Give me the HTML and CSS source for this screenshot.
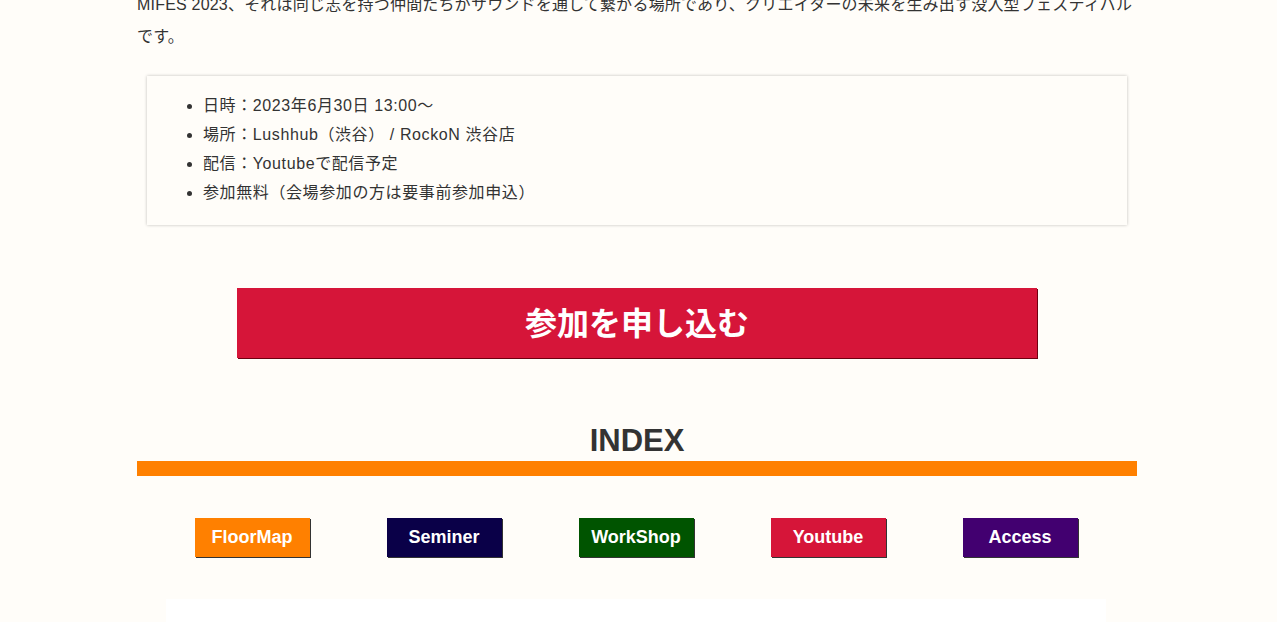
FILE: index.html
```html
<!DOCTYPE html>
<html lang="ja">
<head>
    <meta charset="UTF-8">
    <meta name="viewport" content="width=device-width, initial-scale=1.0">
    <title>MIFES 2023</title>
    <link rel="stylesheet" href="styles.css">
</head>
<body>
    <div class="container">
        <p class="lead">MIFES 2023、それは同じ志を持つ仲間たちがサウンドを通して繋がる場所であり、クリエイターの未来を生み出す没入型フェスティバルです。</p>

        <div class="info">
            <ul>
                <li>日時：2023年6月30日 13:00〜</li>
                <li>場所：Lushhub（渋谷） / RockoN 渋谷店</li>
                <li>配信：Youtubeで配信予定</li>
                <li>参加無料（会場参加の方は要事前参加申込）</li>
            </ul>
        </div>

        <a class="apply" href="#">参加を申し込む</a>

        <h2 class="index-title">INDEX</h2>
        <div class="index-bar"></div>

        <div class="index-links">
            <a class="index-btn floormap" href="#">FloorMap</a>
            <a class="index-btn seminer" href="#">Seminer</a>
            <a class="index-btn workshop" href="#">WorkShop</a>
            <a class="index-btn youtube" href="#">Youtube</a>
            <a class="index-btn access" href="#">Access</a>
        </div>

        <div class="next-section"></div>
    </div>
</body>
</html>
```

FILE: styles.css
```css
body {
    margin: 0;
    padding: 0 3px 0 0;
    background-color: #fffdf9; /* Off white */
    color: #333;
    font-family: "Liberation Sans", "Noto Sans CJK JP", sans-serif;
    font-size: 16px;
    overflow: hidden;
}
.container {
    width: 1000px;
    margin: 0 auto;
}
.lead {
    margin: -11px 0 0;
    line-height: 32px;
    letter-spacing: 0.2px;
}
.info {
    margin: 23px 10px 0;
    padding: 15px 0 18px;
    box-shadow: 0 0 3px rgba(0,0,0,0.25);
}
.info ul {
    margin: 0;
    padding-left: 56px;
}
.info li {
    line-height: 29px;
    letter-spacing: 0.6px;
}
.apply {
    display: block;
    width: 800px;
    height: 70px;
    margin: 63px auto 0;
    background: #d61539; /* Crimson */
    box-shadow: 1px 1px 0 #6e0010;
    color: #fff;
    font-family: "Noto Sans CJK JP", sans-serif;
    font-size: 32px;
    font-weight: bold;
    line-height: 66px;
    text-align: center;
    text-decoration: none;
}
.index-title {
    margin: 63px 0 0;
    height: 40px;
    line-height: 40px;
    font-size: 31px;
    font-weight: bold;
    text-align: center;
    color: #333;
}
.index-bar {
    height: 15px;
    background: #ff8000; /* Orange */
}
.index-links {
    display: flex;
    justify-content: center;
    gap: 77px;
    margin-top: 42px;
    padding-right: 2px;
}
.index-btn {
    width: 115px;
    height: 39px;
    line-height: 39px;
    text-align: center;
    color: #fff;
    font-size: 18px;
    font-weight: bold;
    text-decoration: none;
    box-shadow: 1px 1px 0 #333;
}
.floormap { background: #ff8000; }
.seminer { background: #0a0048; }
.workshop { background: #005400; }
.youtube { background: #d61539; }
.access { background: #420070; }
.next-section {
    width: 940px;
    height: 60px;
    margin: 42px 0 0 29px;
    background: #fff;
}
```
